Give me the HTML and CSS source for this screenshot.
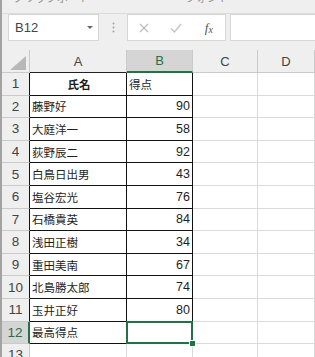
FILE: index.html
```html
<!DOCTYPE html>
<html lang="ja">
<head>
    <meta charset="UTF-8">
    <meta name="viewport" content="width=device-width, initial-scale=1.0">
    <title>Book1 - Excel</title>
    <link rel="stylesheet" href="styles.css">
</head>
<body>
    <div class="sheet-window">
        <div class="ribbon-tail">
            <span class="group-label clip">クリップボード</span>
            <span class="group-label font">フォント</span>
        </div>

        <div class="formula-bar">
            <div class="name-box">
                <span>B12</span>
                <span class="drop"></span>
            </div>
            <div class="grip">
                <svg width="3" height="11" viewBox="0 0 3 11">
                    <circle cx="1.5" cy="1.5" r="1" fill="#a5a5a5"/>
                    <circle cx="1.5" cy="5.5" r="1" fill="#a5a5a5"/>
                    <circle cx="1.5" cy="9.5" r="1" fill="#a5a5a5"/>
                </svg>
            </div>
            <div class="fx-buttons">
                <span>
                    <svg width="10" height="10" viewBox="0 0 10 10">
                        <path d="M1 1 L9 9 M9 1 L1 9" stroke="#bdbdbd" stroke-width="1.3" fill="none"/>
                    </svg>
                </span>
                <span>
                    <svg width="12" height="10" viewBox="0 0 12 10">
                        <path d="M1 5.5 L4.5 9 L11 1" stroke="#c4c4c4" stroke-width="1.3" fill="none"/>
                    </svg>
                </span>
                <span class="fx"><i>f</i><i class="x">x</i></span>
            </div>
            <div class="formula-input"></div>
        </div>

        <div class="grid">
            <!-- column headers -->
            <div class="ch corner">
                <svg width="16" height="14" viewBox="0 0 16 14">
                    <polygon points="16,0 16,14 0,14" fill="#b8b8b8"/>
                </svg>
            </div>
            <div class="ch dark">A</div>
            <div class="ch on">B</div>
            <div class="ch">C</div>
            <div class="ch">D</div>

            <div class="rh">1</div>
            <div class="cell data title">氏名</div>
            <div class="cell data">得点</div>
            <div class="cell"></div>
            <div class="cell"></div>

            <div class="rh">2</div>
            <div class="cell data">藤野好</div>
            <div class="cell data num">90</div>
            <div class="cell"></div>
            <div class="cell"></div>

            <div class="rh">3</div>
            <div class="cell data">大庭洋一</div>
            <div class="cell data num">58</div>
            <div class="cell"></div>
            <div class="cell"></div>

            <div class="rh">4</div>
            <div class="cell data">荻野辰二</div>
            <div class="cell data num">92</div>
            <div class="cell"></div>
            <div class="cell"></div>

            <div class="rh">5</div>
            <div class="cell data">白鳥日出男</div>
            <div class="cell data num">43</div>
            <div class="cell"></div>
            <div class="cell"></div>

            <div class="rh">6</div>
            <div class="cell data">塩谷宏光</div>
            <div class="cell data num">76</div>
            <div class="cell"></div>
            <div class="cell"></div>

            <div class="rh">7</div>
            <div class="cell data">石橋貴英</div>
            <div class="cell data num">84</div>
            <div class="cell"></div>
            <div class="cell"></div>

            <div class="rh">8</div>
            <div class="cell data">浅田正樹</div>
            <div class="cell data num">34</div>
            <div class="cell"></div>
            <div class="cell"></div>

            <div class="rh">9</div>
            <div class="cell data">重田美南</div>
            <div class="cell data num">67</div>
            <div class="cell"></div>
            <div class="cell"></div>

            <div class="rh">10</div>
            <div class="cell data">北島勝太郎</div>
            <div class="cell data num">74</div>
            <div class="cell"></div>
            <div class="cell"></div>

            <div class="rh">11</div>
            <div class="cell data">玉井正好</div>
            <div class="cell data num">80</div>
            <div class="cell"></div>
            <div class="cell"></div>

            <div class="rh on">12</div>
            <div class="cell data">最高得点</div>
            <div class="cell data sel"><span class="handle"></span></div>
            <div class="cell"></div>
            <div class="cell"></div>

            <div class="rh plain">13</div>
            <div class="cell"></div>
            <div class="cell"></div>
            <div class="cell"></div>
            <div class="cell"></div>
        </div>
    </div>
</body>
</html>
```

FILE: styles.css
```css
* {
    box-sizing: border-box;
}
body {
    margin: 0;
    background-color: #fff;
    font-family: "Liberation Sans", Arial, sans-serif;
    overflow: hidden;
}
.sheet-window {
    width: 315px;
    height: 357px;
    border-left: 2px solid #a3a3a3;
    background-color: #efefef;
    overflow: hidden;
}

/* bottom edge of the ribbon, labels cut off */
.ribbon-tail {
    height: 14px;
    display: flex;
    overflow: hidden;
    border-bottom: 1px solid #dcdcdc;
}
.group-label {
    font-family: "Noto Sans CJK JP", sans-serif;
    font-size: 11px;
    line-height: 11px;
    color: #8f8f8f;
    margin-top: -8px;
    white-space: nowrap;
}
.group-label.clip {
    margin-left: 11px;
}
.group-label.font {
    margin-left: 95px;
}

/* name box + formula bar */
.formula-bar {
    height: 36px;
    display: flex;
    align-items: flex-start;
}
.name-box {
    margin-left: 6px;
    width: 91px;
    height: 27px;
    padding: 0 5px 0 6px;
    display: flex;
    align-items: center;
    justify-content: space-between;
    background-color: #fff;
    border: 1px solid #d6d6d6;
    font-size: 13px;
    color: #444;
}
.drop {
    width: 0;
    height: 0;
    border-left: 3px solid transparent;
    border-right: 3px solid transparent;
    border-top: 3px solid #666;
}
.grip {
    width: 28px;
    height: 27px;
    display: flex;
    align-items: center;
    justify-content: center;
}
.fx-buttons {
    width: 99px;
    height: 27px;
    display: flex;
    background-color: #fff;
    border: 1px solid #d6d6d6;
}
.fx-buttons span {
    flex: 1;
    display: flex;
    align-items: center;
    justify-content: center;
}
.fx {
    font-family: "Liberation Serif", serif;
    font-size: 13px;
    color: #555;
}
.fx .x {
    font-size: 10px;
    margin-top: 3px;
}
.formula-input {
    margin-left: 4px;
    flex: 1;
    height: 27px;
    background-color: #fff;
    border: 1px solid #d6d6d6;
    border-right: none;
}

/* worksheet */
.grid {
    display: grid;
    grid-template-columns: 28px 97px 66px 65px 1fr;
    grid-template-rows: 23px repeat(13, 22.6px);
    background-color: #fff;
}
.ch {
    display: flex;
    align-items: center;
    justify-content: center;
    background-color: #efefef;
    border-right: 1px solid #cacaca;
    border-bottom: 1px solid #cacaca;
    font-size: 13px;
    color: #444;
}
.ch.corner {
    align-items: flex-end;
    justify-content: flex-end;
    padding: 0 3px 2px 0;
}
.ch.dark {
    border-bottom-color: #222;
}
.ch.on {
    background-color: #d5d5d5;
    color: #217346;
    border-bottom: 2px solid #217346;
}
.rh {
    display: flex;
    align-items: center;
    justify-content: center;
    background-color: #efefef;
    border-right: 1px solid #111;
    border-bottom: 1px solid #cacaca;
    font-size: 13.5px;
    color: #444;
}
.rh.on {
    background-color: #d5d5d5;
    color: #217346;
    border-right: 2px solid #217346;
}
.rh.plain {
    border-right-color: #cacaca;
}
.cell {
    display: flex;
    align-items: center;
    padding-left: 2px;
    border-right: 1px solid #dadada;
    border-bottom: 1px solid #dadada;
    font-family: "Noto Sans CJK JP", sans-serif;
    font-size: 11.5px;
    color: #1e1e1e;
    white-space: nowrap;
}
.cell.data {
    border-color: #111;
}
.cell.title {
    justify-content: center;
    font-weight: bold;
}
.cell.num {
    justify-content: flex-end;
    padding-right: 2px;
    font-family: "Liberation Sans", Arial, sans-serif;
    font-size: 12.5px;
}
.cell.sel {
    position: relative;
}
.cell.sel::after {
    content: "";
    position: absolute;
    top: -1px;
    left: -1px;
    right: -1px;
    bottom: -1px;
    border: 2px solid #217346;
}
.handle {
    position: absolute;
    right: -4px;
    bottom: -4px;
    width: 7px;
    height: 7px;
    background-color: #217346;
    border: 1px solid #fff;
    z-index: 1;
}
```
